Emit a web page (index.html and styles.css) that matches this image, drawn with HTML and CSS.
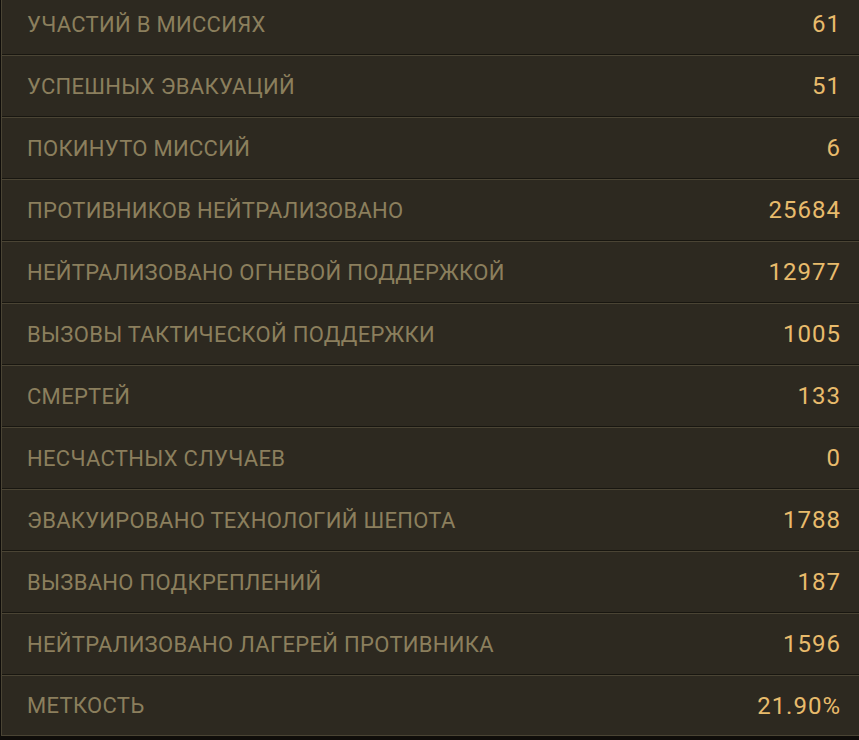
FILE: index.html
```html
<!DOCTYPE html>
<html lang="ru">
<head>
<meta charset="utf-8">
<title>Статистика</title>
<link rel="stylesheet" href="styles.css">
</head>
<body>
<div class="stats">
  <div class="row"><span class="label">УЧАСТИЙ В МИССИЯХ</span><span class="value">61</span></div>
  <div class="row"><span class="label">УСПЕШНЫХ ЭВАКУАЦИЙ</span><span class="value">51</span></div>
  <div class="row"><span class="label">ПОКИНУТО МИССИЙ</span><span class="value">6</span></div>
  <div class="row"><span class="label">ПРОТИВНИКОВ НЕЙТРАЛИЗОВАНО</span><span class="value">25684</span></div>
  <div class="row"><span class="label">НЕЙТРАЛИЗОВАНО ОГНЕВОЙ ПОДДЕРЖКОЙ</span><span class="value">12977</span></div>
  <div class="row"><span class="label">ВЫЗОВЫ ТАКТИЧЕСКОЙ ПОДДЕРЖКИ</span><span class="value">1005</span></div>
  <div class="row"><span class="label">СМЕРТЕЙ</span><span class="value">133</span></div>
  <div class="row"><span class="label">НЕСЧАСТНЫХ СЛУЧАЕВ</span><span class="value">0</span></div>
  <div class="row"><span class="label">ЭВАКУИРОВАНО ТЕХНОЛОГИЙ ШЕПОТА</span><span class="value">1788</span></div>
  <div class="row"><span class="label">ВЫЗВАНО ПОДКРЕПЛЕНИЙ</span><span class="value">187</span></div>
  <div class="row"><span class="label">НЕЙТРАЛИЗОВАНО ЛАГЕРЕЙ ПРОТИВНИКА</span><span class="value">1596</span></div>
  <div class="row"><span class="label">МЕТКОСТЬ</span><span class="value">21.90%</span></div>
</div>
</body>
</html>
```
FILE: styles.css
```css
html, body {
  margin: 0;
  padding: 0;
  background: #0f0d0a;
  height: 100%;
  overflow: hidden;
}
.stats {
  margin-top: -7px;
  margin-left: 1px;
  border-left: 1px solid #4a4434;
  border-bottom: 1px solid #4a4434;
  background: #2d2920;
  font-family: Roboto, "Noto Sans", sans-serif;
}
.row {
  display: flex;
  justify-content: space-between;
  align-items: center;
  height: 60px;
  padding: 0 18px 0 25px;
  border-top: 1px solid #4a4434;
  border-bottom: 1px solid #181610;
}
.row:last-child {
  height: 59px;
  border-bottom: none;
}
.label {
  color: #8b7f5d;
  font-size: 22px;
  letter-spacing: 0.3px;
}
.value {
  color: #e8bb6c;
  font-size: 24px;
  letter-spacing: 1px;
}
```
